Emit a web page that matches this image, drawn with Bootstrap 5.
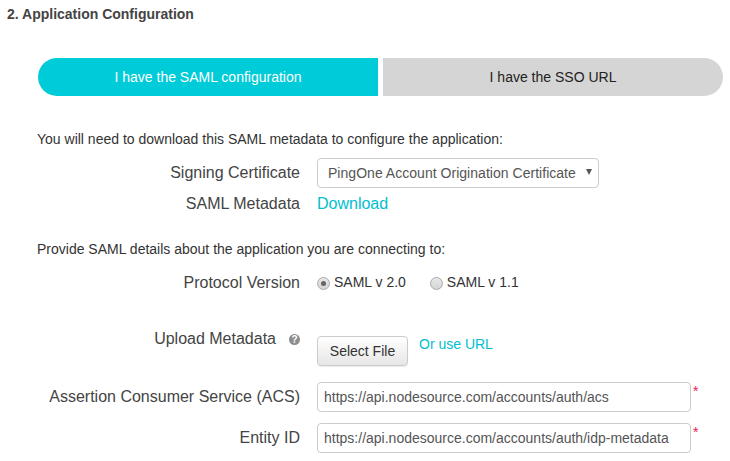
<!DOCTYPE html>
<html lang="en">
<head>
<meta charset="utf-8">
<title>Application Configuration</title>
<link rel="stylesheet" href="https://cdn.jsdelivr.net/npm/bootstrap@5.3.0/dist/css/bootstrap.min.css">
<style>
html,body{height:461px;overflow:hidden}
body{background:#fff;font-family:"Liberation Sans",Arial,sans-serif;color:#333;font-size:14px}
.page-wrap{padding:0 7px 0 37px}
.app-title{font-size:14px;font-weight:700;color:#444;margin:0 0 0 -30px;padding-top:6px;line-height:16px}
.tab-row{margin:36px 0 0 1px;height:38px;gap:5px}
.tab-btn{flex:0 0 340px;height:38px;font-size:14px;line-height:38px;text-align:center}
.tab-on{background:#00cbd8;color:#fff;border-radius:19px 0 0 19px}
.tab-off{background:#d5d5d5;color:#222;border-radius:0 19px 19px 0}
.intro{font-size:14px;line-height:18px;margin:0;color:#333}
.intro-a{margin-top:34px}
.intro-b{margin-top:24px}
.form-line{display:flex}
.lab{flex:0 0 263px;text-align:right;font-size:16px;color:#444;margin:0}
.lab-up{margin-top:-2px}
.ctl{margin-left:17px}
.sel-box{width:282px;height:30px;border:1px solid #ccc;border-radius:4px;font-size:14px;letter-spacing:.03px;color:#555;background:#fff;padding:0 10px;line-height:28px;position:relative;white-space:nowrap}
.sel-arrow{position:absolute;right:6px;top:10px;width:0;height:0;border-left:3px solid transparent;border-right:3px solid transparent;border-top:6px solid #555}
.dl-link,.url-link{color:#00bfd0;text-decoration:none}
.dl-link{font-size:16px;line-height:18px;display:block}
.url-link{font-size:14px;line-height:18px;margin:0 0 0 11px;position:relative;top:-1px}
.radio-fake{width:13px;height:13px;border-radius:50%;border:1px solid #aaa;background:linear-gradient(#e8e8e8,#d4d4d4);display:inline-block;position:relative;flex:none}
.radio-on::after{content:"";position:absolute;left:3px;top:3px;width:5px;height:5px;border-radius:50%;background:#666}
.radio-second{margin-left:24px}
.radio-txt{font-size:14px;line-height:18px;color:#333;margin:0 0 2px 4px}
.help-dot{width:11px;height:11px;border-radius:50%;background:#8d8d8d;color:#fff;font-size:10px;font-weight:700;line-height:11px;text-align:center;display:inline-block;margin-left:13px;vertical-align:1px}
.file-btn{width:91px;height:30px;border:1px solid #ccc;border-radius:4px;background:linear-gradient(#fff,#e6e6e6);font-size:14px;color:#333;padding:0;box-shadow:0 1px 1px rgba(0,0,0,.08)}
.txt-inp{width:374px;height:30px;border:1px solid #ccc;border-radius:4px;font-size:14px;color:#555;padding:0 6px;font-family:inherit;display:block}
.req{color:#e8174f;font-size:14px;line-height:14px;margin-left:2px;padding-top:2px}
.mt-line1{margin-top:10px}
.mt-line2{margin-top:4px}
.mt-line3{margin-top:13px}
.mt-line4{margin-top:34px}
.pt-btn{padding-top:7px}
.mt-line5{margin-top:16px}
.mt-line6{margin-top:11px}
</style>
</head>
<body>
<div class="page-wrap">
  <h2 class="app-title">2. Application Configuration</h2>
  <div class="d-flex tab-row">
    <div class="tab-btn tab-on">I have the SAML configuration</div>
    <div class="tab-btn tab-off">I have the SSO URL</div>
  </div>
  <p class="intro intro-a">You will need to download this SAML metadata to configure the application:</p>
  <div class="form-line align-items-center mt-line1">
    <label class="lab">Signing Certificate</label>
    <div class="ctl sel-box">PingOne Account Origination Certificate<span class="sel-arrow"></span></div>
  </div>
  <div class="form-line align-items-center mt-line2">
    <label class="lab">SAML Metadata</label>
    <div class="ctl"><a class="dl-link" href="#">Download</a></div>
  </div>
  <p class="intro intro-b">Provide SAML details about the application you are connecting to:</p>
  <div class="form-line align-items-center mt-line3">
    <label class="lab">Protocol Version</label>
    <div class="ctl d-flex align-items-center">
      <span class="radio-fake radio-on"></span><span class="radio-txt">SAML v 2.0</span>
      <span class="radio-fake radio-second"></span><span class="radio-txt">SAML v 1.1</span>
    </div>
  </div>
  <div class="form-line mt-line4">
    <label class="lab lab-up">Upload Metadata<span class="help-dot">?</span></label>
    <div class="ctl d-flex align-items-start pt-btn">
      <button class="file-btn" type="button">Select File</button>
      <a class="url-link" href="#">Or use URL</a>
    </div>
  </div>
  <div class="form-line align-items-center mt-line5">
    <label class="lab">Assertion Consumer Service (ACS)</label>
    <div class="ctl d-flex align-items-start">
      <input class="txt-inp" type="text" value="https://api.nodesource.com/accounts/auth/acs">
      <span class="req">*</span>
    </div>
  </div>
  <div class="form-line align-items-center mt-line6">
    <label class="lab">Entity ID</label>
    <div class="ctl d-flex align-items-start">
      <input class="txt-inp" type="text" value="https://api.nodesource.com/accounts/auth/idp-metadata">
      <span class="req">*</span>
    </div>
  </div>
</div>
<script src="https://cdn.jsdelivr.net/npm/bootstrap@5.3.0/dist/js/bootstrap.bundle.min.js"></script>
</body>
</html>
